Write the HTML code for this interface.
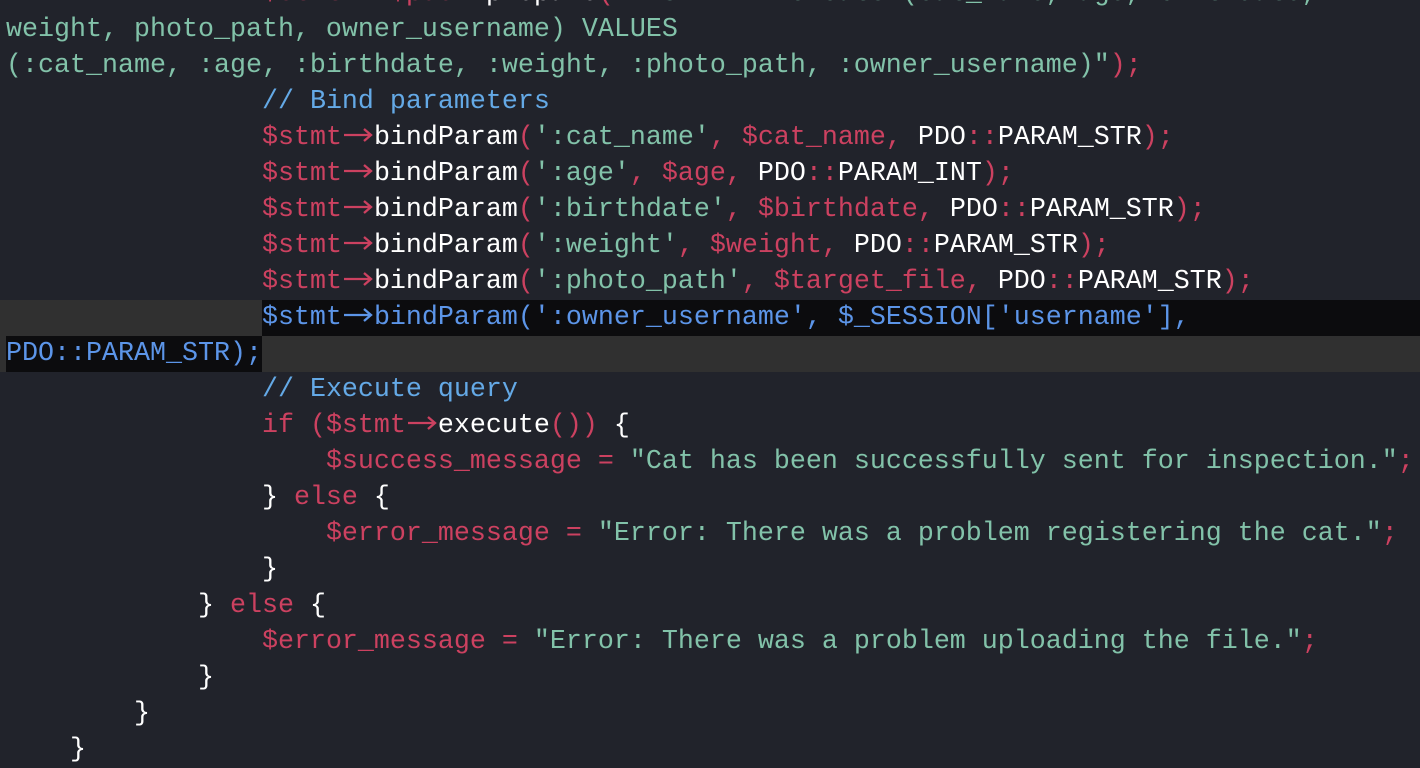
<!DOCTYPE html>
<html><head><meta charset="utf-8"><style>
html,body{margin:0;padding:0;background:#21232b;width:1420px;height:736px;overflow:hidden}
.c{position:absolute;left:0;top:-24px;width:1420px;font-family:"Liberation Mono",monospace;font-size:26.67px;line-height:36px;color:#fff}
.l{height:36px;padding-left:6px;position:relative;white-space:pre}
.r{color:#cc4160}.s{color:#82c2a9}.m{color:#64a9e6}
.hl{position:absolute;background:#303030}
.sel{position:absolute;background:#0c0c0e}
.b{color:#5c95e8}
.a{display:inline-block;width:32px;height:20px;vertical-align:-1px}
.a svg{display:block}
</style></head><body>
<div class="hl" style="left:0;top:300px;width:1420px;height:72px"></div>
<div class="sel" style="left:262px;top:300px;width:1158px;height:36px"></div>
<div class="sel" style="left:6px;top:336px;width:256px;height:36px"></div>
<div class="c">
<div class="l">                <span class="r">$stmt = $pdo<span class="a"><svg width="32" height="20"><path d="M2 10H29M22 4L29 10L22 16" fill="none" stroke="currentColor" stroke-width="2.3"/></svg></span></span>prepare<span class="r">(</span><span class="s">"INSERT INTO cats (cat_name, age, birthdate,</span></div>
<div class="l"><span class="s">weight, photo_path, owner_username) VALUES</span></div>
<div class="l"><span class="s">(:cat_name, :age, :birthdate, :weight, :photo_path, :owner_username)"</span><span class="r">);</span></div>
<div class="l">                <span class="m">// Bind parameters</span></div>
<div class="l">                <span class="r">$stmt<span class="a"><svg width="32" height="20"><path d="M2 10H29M22 4L29 10L22 16" fill="none" stroke="currentColor" stroke-width="2.3"/></svg></span></span>bindParam<span class="r">(</span><span class="s">':cat_name'</span><span class="r">, $cat_name, </span>PDO<span class="r">::</span>PARAM_STR<span class="r">);</span></div>
<div class="l">                <span class="r">$stmt<span class="a"><svg width="32" height="20"><path d="M2 10H29M22 4L29 10L22 16" fill="none" stroke="currentColor" stroke-width="2.3"/></svg></span></span>bindParam<span class="r">(</span><span class="s">':age'</span><span class="r">, $age, </span>PDO<span class="r">::</span>PARAM_INT<span class="r">);</span></div>
<div class="l">                <span class="r">$stmt<span class="a"><svg width="32" height="20"><path d="M2 10H29M22 4L29 10L22 16" fill="none" stroke="currentColor" stroke-width="2.3"/></svg></span></span>bindParam<span class="r">(</span><span class="s">':birthdate'</span><span class="r">, $birthdate, </span>PDO<span class="r">::</span>PARAM_STR<span class="r">);</span></div>
<div class="l">                <span class="r">$stmt<span class="a"><svg width="32" height="20"><path d="M2 10H29M22 4L29 10L22 16" fill="none" stroke="currentColor" stroke-width="2.3"/></svg></span></span>bindParam<span class="r">(</span><span class="s">':weight'</span><span class="r">, $weight, </span>PDO<span class="r">::</span>PARAM_STR<span class="r">);</span></div>
<div class="l">                <span class="r">$stmt<span class="a"><svg width="32" height="20"><path d="M2 10H29M22 4L29 10L22 16" fill="none" stroke="currentColor" stroke-width="2.3"/></svg></span></span>bindParam<span class="r">(</span><span class="s">':photo_path'</span><span class="r">, $target_file, </span>PDO<span class="r">::</span>PARAM_STR<span class="r">);</span></div>
<div class="l b">                $stmt<span class="a"><svg width="32" height="20"><path d="M2 10H29M22 4L29 10L22 16" fill="none" stroke="currentColor" stroke-width="2.3"/></svg></span>bindParam(':owner_username', $_SESSION['username'],</div>
<div class="l b">PDO::PARAM_STR);</div>
<div class="l">                <span class="m">// Execute query</span></div>
<div class="l">                <span class="r">if ($stmt<span class="a"><svg width="32" height="20"><path d="M2 10H29M22 4L29 10L22 16" fill="none" stroke="currentColor" stroke-width="2.3"/></svg></span></span>execute<span class="r">())</span> {</div>
<div class="l">                    <span class="r">$success_message = </span><span class="s">"Cat has been successfully sent for inspection."</span><span class="r">;</span></div>
<div class="l">                } <span class="r">else</span> {</div>
<div class="l">                    <span class="r">$error_message = </span><span class="s">"Error: There was a problem registering the cat."</span><span class="r">;</span></div>
<div class="l">                }</div>
<div class="l">            } <span class="r">else</span> {</div>
<div class="l">                <span class="r">$error_message = </span><span class="s">"Error: There was a problem uploading the file."</span><span class="r">;</span></div>
<div class="l">            }</div>
<div class="l">        }</div>
<div class="l">    }</div>
</div>
</body></html>
